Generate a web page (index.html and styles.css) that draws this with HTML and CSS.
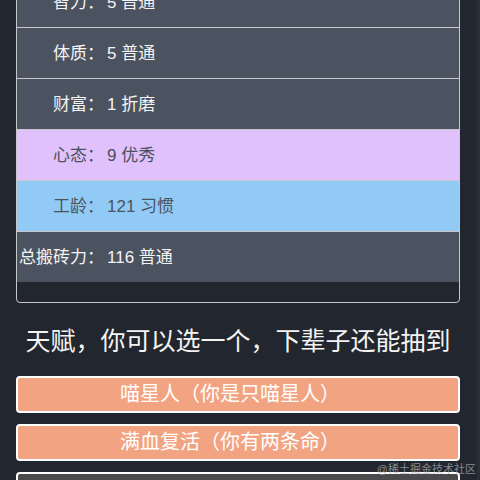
FILE: index.html
```html
<!DOCTYPE html>
<html lang="zh-CN">
<head>
<meta charset="utf-8">
<title>人生重开</title>
<link rel="stylesheet" href="styles.css">
</head>
<body>
<div class="page">
  <main class="main">
    <section class="stats">
      <div class="row row-first"><span class="label">智力：</span><span class="value">5 普通</span></div>
      <div class="row"><span class="label">体质：</span><span class="value">5 普通</span></div>
      <div class="row"><span class="label">财富：</span><span class="value">1 折磨</span></div>
      <div class="row row-purple"><span class="label">心态：</span><span class="value">9 优秀</span></div>
      <div class="row row-blue"><span class="label">工龄：</span><span class="value">121 习惯</span></div>
      <div class="row"><span class="label">总搬砖力：</span><span class="value">116 普通</span></div>
    </section>
    <h2 class="title">天赋，你可以选一个，下辈子还能抽到</h2>
    <div class="talents">
      <button class="talent talent-orange">喵星人（你是只喵星人）</button>
      <button class="talent talent-orange">满血复活（你有两条命）</button>
      <button class="talent talent-grey">&nbsp;</button>
    </div>
  </main>
  <div class="scroll-strip"></div>
</div>
<div class="watermark">@稀土掘金技术社区</div>
</body>
</html>
```
FILE: styles.css
```css
html, body {
  margin: 0;
  padding: 0;
  height: 100%;
  overflow: hidden;
  background: #22262e;
}
body {
  font-family: "Liberation Sans", "Noto Sans CJK SC", sans-serif;
  color: #f4f4f4;
  position: relative;
}
.page {
  display: flex;
  height: 100%;
}
.main {
  flex: 1;
  padding: 0 17px 0 16px;
  min-width: 0;
}
.scroll-strip {
  width: 3px;
  background: #2b2f37;
}
.stats {
  margin-top: -24px;
  border: 1px solid #c8c8cc;
  border-radius: 0 0 4px 4px;
  padding-bottom: 20px;
  background: #22262e;
}
.row {
  display: flex;
  align-items: center;
  height: 47px;
  padding-bottom: 3px;
  border-top: 1px solid #c8c8cc;
  background: #4b5260;
  font-size: 17px;
  color: #f4f4f4;
}
.row-first {
  border-top: none;
}
.row-purple {
  background: #e0c1fb;
  color: #4b5260;
}
.row-blue {
  background: #91cbf5;
  color: #4b5260;
}
.label {
  width: 87px;
  text-align: right;
  flex: none;
  white-space: nowrap;
}
.value {
  margin-left: 3px;
  white-space: nowrap;
}
.title {
  margin: 21px 0 0;
  font-size: 25px;
  line-height: 35px;
  font-weight: normal;
  text-align: center;
  color: #f4f4f4;
  white-space: nowrap;
}
.talents {
  display: flex;
  flex-direction: column;
  gap: 11px;
  margin-top: 17px;
}
.talent {
  display: block;
  width: 100%;
  height: 37px;
  border: 2px solid #ffffff;
  border-radius: 4px;
  font-family: "Liberation Sans", "Noto Sans CJK SC", sans-serif;
  font-size: 20px;
  line-height: 33px;
  padding: 0 16px 0 0;
  color: #ffffff;
  text-align: center;
}
.talent-orange {
  background: #f2a482;
}
.talent-grey {
  background: #4a4a4c;
}
.watermark {
  position: absolute;
  right: 4px;
  bottom: 5px;
  font-size: 11px;
  line-height: 12px;
  color: rgba(170, 172, 178, 0.75);
  white-space: nowrap;
}
```
